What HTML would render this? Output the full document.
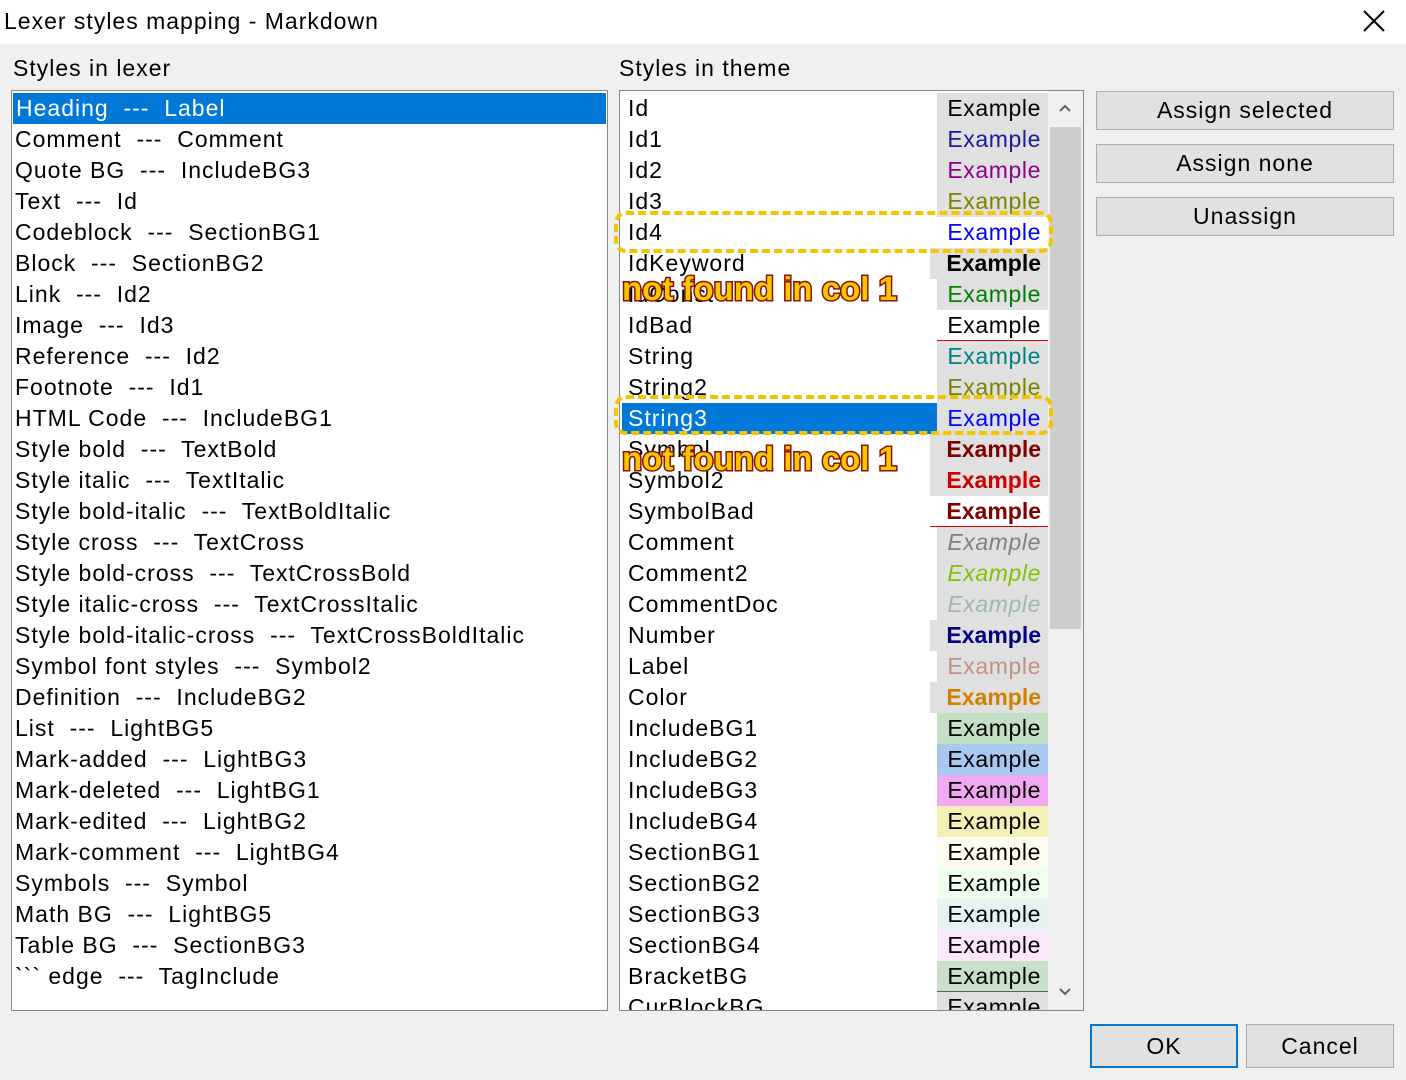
<!DOCTYPE html>
<html><head><meta charset="utf-8"><style>
*{margin:0;padding:0;box-sizing:border-box}
body{width:1406px;height:1080px;background:#f0f0f0;font-family:"Liberation Sans",sans-serif;position:relative;overflow:hidden;color:#000;letter-spacing:1px}
.title{position:absolute;left:0;top:0;width:1406px;height:44px;background:#fff;font-size:23px;line-height:42px;padding-left:4px}
.x{position:absolute;right:20px;top:9px}
.lbl{position:absolute;font-size:23px}
.box{position:absolute;background:#fff;border:1px solid #828790;overflow:hidden}
.r{position:absolute;left:0;height:31px;line-height:31px;font-size:23px;white-space:pre;padding-left:3px}
.sel{background:#0078d7;color:#fff}
.ex{position:absolute;height:31px;line-height:31px;font-size:23px;text-align:right;padding-right:7px;background:#e0e0e0;white-space:pre;letter-spacing:0.6px}
.btn{position:absolute;background:#e1e1e1;border:1px solid #adadad;font-size:23px;text-align:center}
.ann{position:absolute;left:622px;font-size:33px;font-weight:bold;color:#f7c800;-webkit-text-stroke:3px #8a1000;paint-order:stroke fill;letter-spacing:0px;line-height:36px;white-space:pre}
.dash{position:absolute;border:4px dashed #f5c400;border-radius:12px}
</style></head><body>
<div class="title">Lexer styles mapping - Markdown
<svg class="x" width="24" height="24" viewBox="0 0 24 24"><path d="M2 2L22 22M22 2L2 22" stroke="#000" stroke-width="2"/></svg></div>
<div class="lbl" style="left:13px;top:55px">Styles in lexer</div>
<div class="lbl" style="left:619px;top:55px">Styles in theme</div>

<div class="box" style="left:11px;top:90px;width:597px;height:921px">
<div class="r sel" style="top:2px;left:1px;width:593px">Heading  ---  Label</div>
<div class="r" style="top:33px">Comment  ---  Comment</div>
<div class="r" style="top:64px">Quote BG  ---  IncludeBG3</div>
<div class="r" style="top:95px">Text  ---  Id</div>
<div class="r" style="top:126px">Codeblock  ---  SectionBG1</div>
<div class="r" style="top:157px">Block  ---  SectionBG2</div>
<div class="r" style="top:188px">Link  ---  Id2</div>
<div class="r" style="top:219px">Image  ---  Id3</div>
<div class="r" style="top:250px">Reference  ---  Id2</div>
<div class="r" style="top:281px">Footnote  ---  Id1</div>
<div class="r" style="top:312px">HTML Code  ---  IncludeBG1</div>
<div class="r" style="top:343px">Style bold  ---  TextBold</div>
<div class="r" style="top:374px">Style italic  ---  TextItalic</div>
<div class="r" style="top:405px">Style bold-italic  ---  TextBoldItalic</div>
<div class="r" style="top:436px">Style cross  ---  TextCross</div>
<div class="r" style="top:467px">Style bold-cross  ---  TextCrossBold</div>
<div class="r" style="top:498px">Style italic-cross  ---  TextCrossItalic</div>
<div class="r" style="top:529px">Style bold-italic-cross  ---  TextCrossBoldItalic</div>
<div class="r" style="top:560px">Symbol font styles  ---  Symbol2</div>
<div class="r" style="top:591px">Definition  ---  IncludeBG2</div>
<div class="r" style="top:622px">List  ---  LightBG5</div>
<div class="r" style="top:653px">Mark-added  ---  LightBG3</div>
<div class="r" style="top:684px">Mark-deleted  ---  LightBG1</div>
<div class="r" style="top:715px">Mark-edited  ---  LightBG2</div>
<div class="r" style="top:746px">Mark-comment  ---  LightBG4</div>
<div class="r" style="top:777px">Symbols  ---  Symbol</div>
<div class="r" style="top:808px">Math BG  ---  LightBG5</div>
<div class="r" style="top:839px">Table BG  ---  SectionBG3</div>
<div class="r" style="top:870px">&#96;&#96;&#96; edge  ---  TagInclude</div>
</div>

<div class="box" style="left:619px;top:90px;width:465px;height:921px">
<div style="position:absolute;left:428px;top:0;width:35px;height:919px;background:#f0f0f0"></div>
<div style="position:absolute;left:430px;top:36px;width:31px;height:502px;background:#cdcdcd"></div>
<svg style="position:absolute;left:438px;top:12px" width="14" height="10"><path d="M2 8L7 3L12 8" stroke="#606060" stroke-width="2" fill="none"/></svg>
<svg style="position:absolute;left:438px;top:896px" width="14" height="10"><path d="M2 2L7 7L12 2" stroke="#606060" stroke-width="2" fill="none"/></svg>
<div style="position:absolute;left:0;top:0;width:428px">
<div class="r" style="top:2px;left:5px">Id</div>
<div class="r" style="top:33px;left:5px">Id1</div>
<div class="r" style="top:64px;left:5px">Id2</div>
<div class="r" style="top:95px;left:5px">Id3</div>
<div class="r" style="top:126px;left:5px">Id4</div>
<div class="r" style="top:157px;left:5px">IdKeyword</div>
<div class="r" style="top:188px;left:5px">IdConst</div>
<div class="r" style="top:219px;left:5px">IdBad</div>
<div class="r" style="top:250px;left:5px">String</div>
<div class="r" style="top:281px;left:5px">String2</div>
<div class="r sel" style="top:312px;left:2px;width:316px;padding-left:6px">String3</div>
<div class="r" style="top:343px;left:5px">Symbol</div>
<div class="r" style="top:374px;left:5px">Symbol2</div>
<div class="r" style="top:405px;left:5px">SymbolBad</div>
<div class="r" style="top:436px;left:5px">Comment</div>
<div class="r" style="top:467px;left:5px">Comment2</div>
<div class="r" style="top:498px;left:5px">CommentDoc</div>
<div class="r" style="top:529px;left:5px">Number</div>
<div class="r" style="top:560px;left:5px">Label</div>
<div class="r" style="top:591px;left:5px">Color</div>
<div class="r" style="top:622px;left:5px">IncludeBG1</div>
<div class="r" style="top:653px;left:5px">IncludeBG2</div>
<div class="r" style="top:684px;left:5px">IncludeBG3</div>
<div class="r" style="top:715px;left:5px">IncludeBG4</div>
<div class="r" style="top:746px;left:5px">SectionBG1</div>
<div class="r" style="top:777px;left:5px">SectionBG2</div>
<div class="r" style="top:808px;left:5px">SectionBG3</div>
<div class="r" style="top:839px;left:5px">SectionBG4</div>
<div class="r" style="top:870px;left:5px">BracketBG</div>
<div class="r" style="top:901px;left:5px">CurBlockBG</div>
</div>
<div class="ex" style="top:2px;left:317px;width:111px">Example</div>
<div class="ex" style="top:33px;left:317px;width:111px;color:#1a1a9a">Example</div>
<div class="ex" style="top:64px;left:317px;width:111px;color:#8b008b">Example</div>
<div class="ex" style="top:95px;left:317px;width:111px;color:#808000">Example</div>
<div class="ex" style="top:126px;left:317px;width:111px;color:#0000ff;background:#fff">Example</div>
<div class="ex" style="top:157px;left:310px;width:118px;font-weight:bold;letter-spacing:0">Example</div>
<div class="ex" style="top:188px;left:317px;width:111px;color:#008000">Example</div>
<div class="ex" style="top:219px;left:317px;width:111px;background:#fff;border-bottom:1px solid #e00000">Example</div>
<div class="ex" style="top:250px;left:317px;width:111px;color:#008080">Example</div>
<div class="ex" style="top:281px;left:317px;width:111px;color:#808000">Example</div>
<div class="ex" style="top:312px;left:317px;width:111px;color:#0000ff">Example</div>
<div class="ex" style="top:343px;left:310px;width:118px;color:#800000;font-weight:bold;letter-spacing:0">Example</div>
<div class="ex" style="top:374px;left:310px;width:118px;color:#d00000;font-weight:bold;letter-spacing:0">Example</div>
<div class="ex" style="top:405px;left:310px;width:118px;color:#800000;font-weight:bold;letter-spacing:0;background:#fff;border-bottom:1px solid #e00000">Example</div>
<div class="ex" style="top:436px;left:317px;width:111px;color:#808080;font-style:italic">Example</div>
<div class="ex" style="top:467px;left:317px;width:111px;color:#80c000;font-style:italic">Example</div>
<div class="ex" style="top:498px;left:317px;width:111px;color:#a0b8a8;font-style:italic">Example</div>
<div class="ex" style="top:529px;left:310px;width:118px;color:#000080;font-weight:bold;letter-spacing:0">Example</div>
<div class="ex" style="top:560px;left:317px;width:111px;color:#c09080">Example</div>
<div class="ex" style="top:591px;left:310px;width:118px;color:#d08000;font-weight:bold;letter-spacing:0">Example</div>
<div class="ex" style="top:622px;left:317px;width:111px;background:#c4e0c4">Example</div>
<div class="ex" style="top:653px;left:317px;width:111px;background:#a8c8f0">Example</div>
<div class="ex" style="top:684px;left:317px;width:111px;background:#f0a8f0">Example</div>
<div class="ex" style="top:715px;left:317px;width:111px;background:#f2f0b4">Example</div>
<div class="ex" style="top:746px;left:317px;width:111px;background:#fffdf2">Example</div>
<div class="ex" style="top:777px;left:317px;width:111px;background:#effeef">Example</div>
<div class="ex" style="top:808px;left:317px;width:111px;background:#e4f2f2">Example</div>
<div class="ex" style="top:839px;left:317px;width:111px;background:#fce6fc">Example</div>
<div class="ex" style="top:870px;left:317px;width:111px;background:#c8dfc8;border-bottom:1px solid #606060">Example</div>
<div class="ex" style="top:901px;left:317px;width:111px">Example</div>
</div>

<div class="dash" style="left:614px;top:211px;width:439px;height:42px"></div>
<div class="dash" style="left:614px;top:395px;width:439px;height:40px"></div>
<div class="ann" style="top:271px">not found in col 1</div>
<div class="ann" style="top:441px">not found in col 1</div>

<div class="btn" style="left:1096px;top:91px;width:298px;height:39px;line-height:37px">Assign selected</div>
<div class="btn" style="left:1096px;top:144px;width:298px;height:39px;line-height:37px">Assign none</div>
<div class="btn" style="left:1096px;top:197px;width:298px;height:39px;line-height:37px">Unassign</div>
<div class="btn" style="left:1090px;top:1024px;width:148px;height:44px;line-height:40px;border:2px solid #0078d7">OK</div>
<div class="btn" style="left:1246px;top:1024px;width:148px;height:44px;line-height:42px">Cancel</div>
</body></html>
